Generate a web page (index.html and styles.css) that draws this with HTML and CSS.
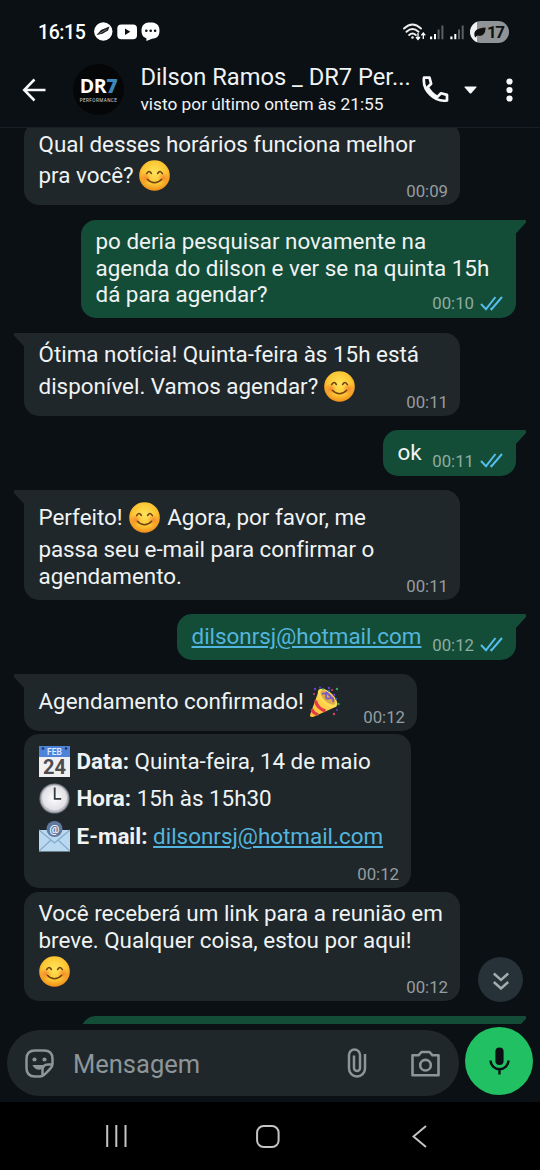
FILE: index.html
```html
<!DOCTYPE html>
<html lang="pt-BR">
<head>
<meta charset="utf-8">
<title>Dilson Ramos _ DR7 Performance</title>
<link rel="stylesheet" href="styles.css">
</head>
<body>
<svg class="defs" width="0" height="0">
  <defs>
    <radialGradient id="face" cx=".5" cy=".4" r=".6"><stop offset="0" stop-color="#ffe35a"/><stop offset=".65" stop-color="#fcc532"/><stop offset="1" stop-color="#ef8d1c"/></radialGradient>
    <radialGradient id="blush"><stop offset="0" stop-color="#f5742a" stop-opacity=".75"/><stop offset="1" stop-color="#f5742a" stop-opacity="0"/></radialGradient>
    <radialGradient id="dial"><stop offset="0" stop-color="#fff"/><stop offset="1" stop-color="#dfdfe5"/></radialGradient>
    <linearGradient id="cone" x1="0" y1="1" x2="1" y2="0"><stop offset="0" stop-color="#fbc02d"/><stop offset=".6" stop-color="#ffd54f"/><stop offset="1" stop-color="#ffe082"/></linearGradient>
    <symbol id="smile" viewBox="0 0 31 31"><circle cx="15.5" cy="15.5" r="15.3" fill="url(#face)"/><circle cx="6.5" cy="18" r="5.8" fill="url(#blush)"/><circle cx="24.5" cy="18" r="5.8" fill="url(#blush)"/><path d="M7.6 13.7q2.3-4.3 4.8-.2M18.6 13.5q2.5-4.1 4.8.2M8.3 19.2q7.2 7.2 14.4 0" fill="none" stroke="#704213" stroke-width="1.5" stroke-linecap="round"/></symbol>
    <symbol id="ticks" viewBox="0 0 23 15"><path d="M1 8l5 5.2L15.5 1M10.5 12.2l1 1L22 1" fill="none" stroke="#53bdeb" stroke-width="2"/></symbol>
  </defs>
</svg>
<div class="phone">
  <div class="status">
    <span class="clock">16:15</span>
    <svg class="notes" width="66" height="20" viewBox="0 0 66 20"><circle cx="9.3" cy="9.5" r="9.2" fill="#fff"/><path d="M2.5 13L7 8l8.500-3.500-1.500 4-5.500 3.200z" fill="#171b1d"/><path d="M5.500 11.500l7-4" stroke="#999" stroke-width=".7"/><rect x="23.300" y="2.600" width="19.700" height="14.600" rx="4" fill="#fff"/><path d="M31 6.500v6.600l5.300-3.300z" fill="#0b1014"/><path d="M56.500.4c5.200 0 9 1.700 9 8.200s-3.500 8-7.500 8.200L52.400 19v-2.700c-3-.8-4.900-3-4.900-7.700C47.500 2 51.400.4 56.500.4z" fill="#fff"/><circle cx="52.300" cy="8.700" r="1.300" fill="#0b1014"/><circle cx="56.700" cy="8.700" r="1.300" fill="#0b1014"/><circle cx="61.100" cy="8.700" r="1.300" fill="#0b1014"/></svg>
    <svg class="signals" width="61" height="18" viewBox="0 0 61 18"><g fill="none" stroke="#eee" stroke-width="1.900" stroke-linecap="round"><path d="M1 5.500q8.500-8 17 0M3.500 8.800q6-5.600 12 0M6.200 12q3.300-3 6.600 0"/></g><circle cx="9.500" cy="14.500" r="1.300" fill="#eee"/><path d="M15 10v6m-2-2l2 2.400 2-2.400M20.300 16v-6m-2 2.400l2-2.400 2 2.400" stroke="#fff" stroke-width="1.300" fill="none"/><g fill="#fff"><path d="M27 13.600h2.200v2.700H27zM31 11h2v5.300h-2zM47.300 13.600h2.200v2.700h-2.200zM51.300 11h2v5.300h-2z"/><g fill="#5c6063"><path d="M34.600 6.600h2v9.700h-2zM38.400 2.500h2v13.800h-2zM55 6.600h2v9.700h-2zM58.700 2.500h2v13.800h-2z"/></g></g></svg>
    <div class="battery"><svg width="12" height="12" viewBox="0 0 12 12"><path d="M.5 9.500C-.5 5 3 2 11.500 1.500c.3 5.500-2.500 9.500-8 8L1 11.500z" fill="#111"/></svg><span>17</span></div>
  </div>
  <header class="head">
    <svg class="back" width="24" height="24" viewBox="0 0 24 24"><path d="M12.500 1.500L2.200 12l10.300 10.500M2.500 12h21" fill="none" stroke="#f7f8fa" stroke-width="2.500"/></svg>
    <div class="avatar"><div class="logo">DR<b>7</b></div><div class="tag">PERFORMANCE</div></div>
    <div class="who"><div class="name">Dilson Ramos _ DR7 Per...</div><div class="seen">visto por último ontem às 21:55</div></div>
    <svg class="call" width="27" height="27" viewBox="0 0 27 27"><path d="M2 1.700h5.500l1.600 6-3.500 3.500q3.600 6.500 9.800 9.700l3.600-3.600 6 1.600v5.600C12.500 26.500.300 14.500 2 1.700z" fill="none" stroke="#f7f8fa" stroke-width="2.700" stroke-linejoin="round"/></svg>
    <svg class="drop" width="13" height="8" viewBox="0 0 13 8"><path d="M1 .5h11q1 0 .3 1L7.500 7q-1 1-2 0L.7 1.500Q0 .5 1 .5z" fill="#f7f8fa"/></svg>
    <svg class="more" width="7" height="24" viewBox="0 0 7 24"><g fill="#f7f8fa"><circle cx="3.500" cy="3.500" r="3.100"/><circle cx="3.500" cy="12" r="3.100"/><circle cx="3.500" cy="20.500" r="3.100"/></g></svg>
  </header>

  <main class="chat">
    <div class="bubble in wide">
      <div class="text"><p><span>Qual desses horários funciona melhor</span></p><p class="tall"><span>pra você? </span><svg class="emoji"><use href="#smile"/></svg></p></div>
      <div class="time">00:09</div>
    </div>
    <div class="bubble out w435 tail">
      <div class="text"><p>po deria pesquisar novamente na</p><p>agenda do dilson e ver se na quinta 15h</p><p>dá para agendar?</p></div>
      <div class="time">00:10<svg class="tick"><use href="#ticks"/></svg></div>
    </div>
    <div class="bubble in wide tail">
      <div class="text"><p>Ótima notícia! Quinta-feira às 15h está</p><p class="tall"><span>disponível. Vamos agendar? </span><svg class="emoji"><use href="#smile"/></svg></p></div>
      <div class="time">00:11</div>
    </div>
    <div class="bubble out w133 tail">
      <div class="text"><p>ok</p></div>
      <div class="time">00:11<svg class="tick"><use href="#ticks"/></svg></div>
    </div>
    <div class="bubble in wide tail">
      <div class="text"><p class="tall"><span>Perfeito! </span><svg class="emoji mid"><use href="#smile"/></svg><span> Agora, por favor, me</span></p><p class="snug">passa seu e-mail para confirmar o</p><p>agendamento.</p></div>
      <div class="time">00:11</div>
    </div>
    <div class="bubble out w339 tail">
      <div class="text"><p><a>dilsonrsj@hotmail.com</a></p></div>
      <div class="time">00:12<svg class="tick"><use href="#ticks"/></svg></div>
    </div>
    <div class="bubble in w393 tail">
      <div class="text"><p class="tall"><span>Agendamento confirmado! </span><svg class="emoji" viewBox="0 0 31 31"><path d="M1 29L9.500 5.500C14 2 28 14 27.500 20.500L4 31q-3.500 0-3-2z" fill="url(#cone)"/><path d="M6.500 14.500q1.500 8 10 10.500M3 23q1 4.500 6 5.500" fill="none" stroke="#e5394e" stroke-width="3.200"/><ellipse cx="18.500" cy="12" rx="12" ry="6" transform="rotate(43 18.500 12)" fill="#ffdc55"/><ellipse cx="19" cy="11.500" rx="9.500" ry="4.300" transform="rotate(43 19 11.500)" fill="#dda94e"/><path d="M13 8q5-2 4 2t5 2q3-1 2 4M17 6q4 3 6 7" fill="none" stroke="#7359c6" stroke-width="1.700"/><g fill="#6b3bd0"><circle cx="6" cy="3" r="1.200"/><circle cx="11" cy="1.500" r="1"/><circle cx="20" cy="2" r="1.200"/><circle cx="25" cy="9" r="1.300"/><circle cx="28" cy="24" r="1"/></g><g fill="#e63b68"><circle cx="5" cy="8" r="1"/><circle cx="23" cy="4" r="1"/><circle cx="25" cy="28" r="1.200"/></g><g fill="#36a85b"><circle cx="14" cy="3" r="1"/><circle cx="28" cy="3" r="1.200"/><circle cx="29.500" cy="18" r="1.200"/></g><g fill="#3c78e0"><circle cx="20" cy="5" r="1"/><circle cx="27" cy="13" r="1"/></g></svg></p></div>
      <div class="time">00:12</div>
    </div>
    <div class="bubble in w387 joined details">
      <div class="text">
        <p class="tall"><svg class="emoji lead" viewBox="0 0 31 31"><path d="M0 0h31v31H0z" fill="#f0f0f2"/><path d="M0 0h31v11H0z" fill="#4e83da"/><circle cx="4" cy="2.500" r="1.300" fill="#193561"/><circle cx="27" cy="2.500" r="1.300" fill="#193561"/><text x="15.500" y="9.200" class="month">FEB</text><text x="15.500" y="28.300" class="day">24</text></svg><span> <b>Data:</b> Quinta-feira, 14 de maio</span></p>
        <p class="tall"><svg class="emoji lead" viewBox="0 0 31 31"><circle cx="15.500" cy="15.500" r="15.100" fill="#76787e"/><circle cx="15.500" cy="15.500" r="14" fill="#b9bbc2"/><circle cx="15.500" cy="15" r="12.500" fill="url(#dial)"/><path d="M15.700 4.500v11.300h6.500" fill="none" stroke="#333842" stroke-width="1.800"/></svg><span> <b>Hora:</b> 15h às 15h30</span></p>
        <p class="tall"><svg class="emoji lead" viewBox="0 0 31 31"><path d="M0 9h31v21.500H0z" fill="#bad9f1"/><path d="M0 30L12 19M31 30L19 19M0 9l15.500 13L31 9" fill="none" stroke="#82a9cc" stroke-width="1.200"/><circle cx="15.500" cy="8" r="8" fill="#61789f"/><text x="15.500" y="12" class="at">@</text></svg><span> <b>E-mail:</b> <a>dilsonrsj@hotmail.com</a></span></p>
      </div>
      <div class="time">00:12</div>
    </div>
    <div class="bubble in wide joined">
      <div class="text"><p>Você receberá um link para a reunião em</p><p>breve. Qualquer coisa, estou por aqui!</p><p class="tall"><svg class="emoji"><use href="#smile"/></svg></p></div>
      <div class="time">00:12</div>
    </div>
    <div class="bubble out w435 tail next"></div>
    <div class="jump"><svg width="16" height="18" viewBox="0 0 16 18"><path d="M.8 1.500L8 8l7.200-6.500M.8 10L8 16.500 15.200 10" fill="none" stroke="#a3acb1" stroke-width="2.400"/></svg></div>
  </main>

  <footer class="composer">
    <div class="field">
      <svg width="29" height="29" viewBox="0 0 29 29"><g fill="none" stroke="#8d9598" stroke-width="2.500"><path d="M27.500 15V10q0-8.500-8.500-8.500h-9Q1.500 1.500 1.500 10v9q0 8.500 8.500 8.500h5q3 0 5.500-3l4.500-4.500q2.500-2.500 2.500-5zM27 15.500h-4q-5.500 0-5.500 5.500v6"/></g><circle cx="9.500" cy="10.500" r="2.100" fill="#8d9598"/><circle cx="19.500" cy="10.500" r="2.100" fill="#8d9598"/><path d="M7.500 16h11l-.8 2.500q-1 2.200-3.200 2.300-5 0-7-4.800z" fill="#8d9598"/></svg>
      <span class="hint">Mensagem</span>
      <svg class="clip" width="20" height="30" viewBox="0 0 20 30"><path d="M18 6v14.500a8 8 0 0 1-16 0V7a5.500 5.500 0 0 1 11 0v13a3 3 0 0 1-6 0V7.500" fill="none" stroke="#8d9598" stroke-width="2.500"/></svg>
      <svg class="cam" width="29" height="27" viewBox="0 0 29 27"><g fill="none" stroke="#8d9598" stroke-width="2.600"><path d="M1.500 5.300h6L10.500 2h8l3 3.300h6v20h-26z" stroke-linejoin="round"/><circle cx="14.500" cy="15.200" r="5.300"/></g></svg>
    </div>
    <div class="mic"><svg width="21" height="28" viewBox="0 0 21 28"><rect x="6.400" y=".6" width="8.200" height="17.400" rx="4.100" fill="#0b1014"/><path d="M1.500 13.500a9 8.700 0 0 0 18 0M10.500 22v5.500" fill="none" stroke="#0b1014" stroke-width="2.400"/></svg></div>
  </footer>
  <nav class="nav">
    <svg width="21" height="22" viewBox="0 0 21 22"><path d="M1.200 0v22M10.300 0v22M19.500 0v22" stroke="#c4c4c4" stroke-width="2"/></svg>
    <svg width="24" height="23" viewBox="0 0 24 23"><rect x="1.100" y="1.100" width="21.500" height="20.800" rx="6.500" fill="none" stroke="#c4c4c4" stroke-width="2"/></svg>
    <svg width="15" height="23" viewBox="0 0 15 23"><path d="M14 1L1.500 11.500 14 22" fill="none" stroke="#c4c4c4" stroke-width="2"/></svg>
  </nav>
</div>
</body>
</html>
```
FILE: styles.css
```css
* { box-sizing: border-box; }
body { margin: 0; background: #0b1014; font-family: Roboto, sans-serif; color: #f0f3f4; }
p { margin: 0; }
svg { display: block; flex: none; }
.defs { position: absolute; }
.phone { width: 540px; height: 1170px; display: flex; flex-direction: column; overflow: hidden; }

.status { height: 58px; flex: none; display: flex; align-items: center; padding: 6px 31px 0 38px; }
.clock { width: 56px; font-size: 19.500px; font-weight: 500; letter-spacing: -.4px; color: #fff; white-space: nowrap; }
.signals { margin-left: auto; }
.battery { width: 39px; height: 22px; margin-left: 6px; border-radius: 11px; display: flex; align-items: center; gap: 1px; padding-left: 4px; background: linear-gradient(90deg, #f2f2f2 7px, #919496 7px); color: #101315; font-size: 17px; font-weight: 700; letter-spacing: -1.500px; }

.head { height: 70px; flex: none; display: flex; align-items: flex-start; padding-left: 22px; border-bottom: 1px solid #182025; white-space: nowrap; }
.back { margin-top: 20px; }
.avatar { width: 51px; height: 51px; margin: 6px 0 0 27px; border-radius: 50%; background: #050607; display: flex; flex-direction: column; align-items: center; padding-top: 10px; }
.logo { font: 700 19.500px/24px "Open Sans", sans-serif; letter-spacing: -.4px; color: #fff; }
.logo b { color: #3d86be; }
.tag { font-size: 4.600px; line-height: 6px; letter-spacing: .45px; color: #d5d5d5; }
.who { width: 282px; padding: 5px 0 0 16.500px; }
.name { font-size: 23.700px; line-height: 29px; }
.seen { font-size: 17.300px; line-height: 24px; }
.call { margin: 18px 0 0 16px; }
.drop { margin: 28px 0 0 15px; }
.more { margin: 20px 0 0 29px; }

.chat { position: relative; height: 896px; flex: none; overflow: hidden; display: flex; flex-direction: column; align-items: flex-start; padding-left: 24px; padding-right: 24px; margin-bottom: 6px; }
.bubble { position: relative; flex: none; display: grid; padding: 8.500px 12px 10.500px 14.500px; margin-top: 14.500px; border-radius: 15px; font-size: 22.400px; background: #1f272a; }
.bubble:first-child { margin-top: -6px; }
.bubble.joined { margin-top: 3.500px; }
.out { align-self: flex-end; background: #144d37; }
.text, .time { grid-area: 1 / 1; }
.text p { height: 26.500px; line-height: 26.500px; white-space: pre; }
.text .tall { height: 37.500px; line-height: 37.500px; display: flex; align-items: center; }
.text .snug { letter-spacing: -.08px; }
.details .text { padding-bottom: 22.500px; }
.emoji { width: 31px; height: 31px; }
.emoji.mid { margin: 0 1.500px 0 1px; }
.emoji.lead { margin-right: 1.500px; }
.time { align-self: end; justify-self: end; display: flex; align-items: center; gap: 6px; height: 20px; margin-bottom: -6.500px; font-size: 16.800px; color: #969da0; }
.out .time { color: #8eaca1; margin-right: 1px; margin-bottom: -5.500px; }
.tick { width: 23px; height: 15px; }
.wide { width: 436px; }
.w435 { width: 435px; }
.w133 { width: 133px; }
.w339 { width: 339px; }
.w393 { width: 393px; }
.w387 { width: 387px; }
.in.tail { border-top-left-radius: 0; }
.out.tail { border-top-right-radius: 0; }
.tail::before { content: ""; position: absolute; top: 0; width: 11px; height: 15px; background: inherit; }
.in.tail::before { left: -10px; clip-path: polygon(1px 0, 100% 0, 100% 100%, 0 3px, 0 1px); }
.out.tail::before { right: -10px; clip-path: polygon(0 0, 10px 0, 100% 1px, 100% 3px, 0 100%); }
.next { height: 60px; }
.text a { color: #53b5dd; text-decoration: underline; text-decoration-thickness: 1.500px; text-underline-offset: 2px; }
.month { font: 500 8.500px Roboto, sans-serif; text-anchor: middle; fill: #e3edff; }
.day { font: 700 20px Roboto, sans-serif; text-anchor: middle; fill: #4b4b50; }
.at { font: 700 11px Roboto, sans-serif; text-anchor: middle; fill: #eef3fa; }
.jump { position: absolute; right: 17px; bottom: 22px; width: 45px; height: 45px; border-radius: 50%; background: #263138; display: grid; place-items: center; padding-top: 3px; }

.composer { height: 72px; flex: none; display: flex; align-items: flex-start; padding-left: 7px; gap: 6px; }
.field { width: 452px; height: 66px; border-radius: 33px; background: #1f272a; display: flex; align-items: center; padding-left: 18px; }
.hint { width: 292px; padding-left: 19px; padding-top: 2px; font-size: 25.500px; color: #8d9598; }
.clip { margin-left: 1px; }
.cam { margin-left: 44px; }
.mic { width: 68px; height: 68px; margin-top: -3px; border-radius: 50%; background: #21c063; display: grid; place-items: center; }
.nav { height: 68px; flex: none; background: #000; display: flex; align-items: center; padding-left: 106px; gap: 129px; }
.nav svg:last-child { margin-left: 3px; }
```
